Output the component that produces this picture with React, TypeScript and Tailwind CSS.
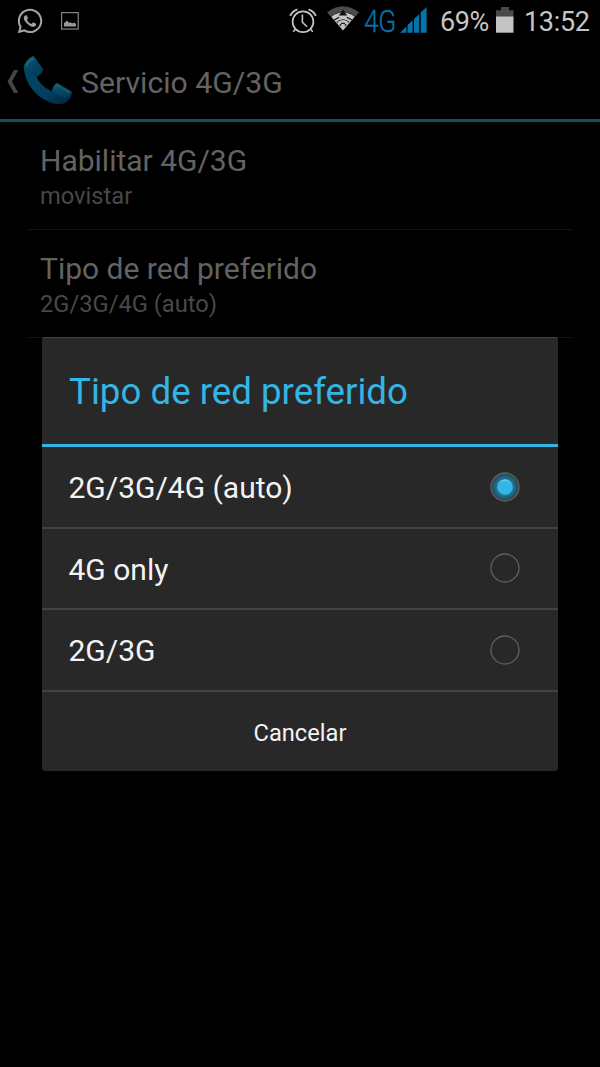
import { useState } from "react";
import { FaWhatsapp } from "react-icons/fa";

const options = ["2G/3G/4G (auto)", "4G only", "2G/3G"];

function PictureIcon() {
  return (
    <svg className="block h-[18px] w-[18px]" viewBox="0 0 18 18" fill="none">
      <rect x="0.6" y="0.6" width="16.6" height="16.4" stroke="#858585" strokeWidth="1.2" />
      <path d="M3 14.6v-3.8l1.4-.4.8-1.6 1.3.2 1.2 1.8 1.5-.6 1.2.9 1.8.2 1.4-.8 1.4 2.1v2z" fill="#999" />
    </svg>
  );
}

function AlarmIcon() {
  return (
    <svg className="block h-[26px] w-[28px]" viewBox="0 0 28 26" fill="none" stroke="#c4c4c4">
      <circle cx="14" cy="13.8" r="10.4" strokeWidth="1.7" />
      <path d="M1.2 7.8Q3.2 3.2 8.4 1.3M19.6 1.3q5.2 1.9 7.2 6.5" strokeWidth="1.9" />
      <path d="M13.4 6.5v7.7l4.6 4.6M6.4 21.3l-2.2 2.4M21.6 21.3l2.2 2.4" strokeWidth="1.6" />
    </svg>
  );
}

function WifiIcon() {
  return (
    <svg className="block h-[25px] w-[32px]" viewBox="0 0 32 25">
      <path d="M0 6.3Q16-5.7 32 6.3l-3.6 4.2Q16 .8 3.6 10.5z" fill="#4b4b4b" />
      <path d="M4.2 10.8Q16 1.7 27.8 10.8L16 24.5z" fill="#c5c5c5" />
      <path d="M16 4.6l-3 4.3h6zM7.2 14l5-2.8M24.8 14l-5-2.8M10 16.3q6-4.8 12 0M13.4 20l1.5-2.6M18.6 20l-1.5-2.6" fill="#111" stroke="#111" strokeWidth="1.3" />
      <path d="M10.5 16.1q5.5-4.2 11 0L16 22z" fill="#c5c5c5" />
      <path d="M14 17.4h4M12.6 18.7l2 .3M19.4 18.7l-2 .3" stroke="#222" strokeWidth="1.2" />
    </svg>
  );
}

function SignalIcon() {
  return (
    <svg className="block h-[26px] w-[27px]" viewBox="0 0 27 26" fill="#0673ae">
      <path d="M0 25.7 6.4 19.4V25.7zM7.6 18.1l5-4.9v12.5h-5zM14 11.9l5.3-5v18.8H14zM20.7 5.4 26.6 0v25.7h-5.9z" />
    </svg>
  );
}

function BatteryIcon() {
  return (
    <svg className="block h-[26px] w-[18px]" viewBox="0 0 18 26">
      <path d="M0 3.2h5V0h8v3.2h4.5V10H0z" fill="#494949" />
      <path d="M0 9.5h17.5v16.2H0z" fill="#c3c3c3" />
    </svg>
  );
}

function PhoneIcon() {
  return (
    <svg className="block h-[50px] w-[50px]" viewBox="0 0 50 50">
      <defs>
        <linearGradient id="handle" x1="0.3" y1="0.3" x2="0.8" y2="1">
          <stop offset="0" stopColor="#044463" />
          <stop offset="0.6" stopColor="#033e60" />
          <stop offset="1" stopColor="#032840" />
        </linearGradient>
        <linearGradient id="ear" x1="0.1" y1="0" x2="0.7" y2="1">
          <stop offset="0" stopColor="#1d6470" />
          <stop offset="0.35" stopColor="#074b68" />
          <stop offset="1" stopColor="#013a5a" />
        </linearGradient>
      </defs>
      <path
        d="M.8 13C1 8.5 5.8 2.2 10.7 1.3L19.8 14C20.4 15.8 16.5 20.5 13.5 21.8 16 28 22.5 34 29 36.2 29.6 32.6 32.4 28 34.4 28.3L48.6 36.4C50.2 41.8 44.8 47.9 38.5 49.2 28 49.8 16.5 43.5 9.5 34.5 4.3 27.8 1.5 20.8.8 13z"
        fill="url(#handle)"
      />
      <path d="M.8 13C1 8.5 5.8 2.2 10.7 1.3L19.8 14C20.4 15.8 16.5 20.5 13.5 21.8L4.5 16z" fill="url(#ear)" />
      <path d="M29 36.2C29.6 32.6 32.4 28 34.4 28.3L48.6 36.4C48.4 39 45.5 42 42 43.5z" fill="url(#ear)" />
      <path d="M2 10.5Q5 4.5 10.3 2.2L12 4.6Q7 6 4 12z" fill="#246c74" opacity="0.7" />
      <path d="M34 29l13.8 7.7-2 1.8L33 31z" fill="#1d6875" opacity="0.6" />
    </svg>
  );
}

function StatusBar() {
  return (
    <header className="flex h-[42px] shrink-0 items-start text-[#c5c5c5]">
      <FaWhatsapp className="mt-[7px] ml-[16.5px] h-[28px] w-[26px] text-[#a3a3a3]" />
      <div className="mt-[12px] ml-[18.5px]"><PictureIcon /></div>
      <div className="mt-[8px] ml-[210px]"><AlarmIcon /></div>
      <div className="mt-[6px] ml-[10px]"><WifiIcon /></div>
      <span className="mt-[2px] ml-[5px] w-[34px] origin-left scale-x-[0.85] text-[31px] leading-[40px] font-light tracking-[-0.3px] whitespace-nowrap text-[#0673ae] [-webkit-text-stroke:0.3px_#0673ae]">4G</span>
      <div className="mt-[7px] ml-[2px]"><SignalIcon /></div>
      <span className="mt-[2px] ml-[13px] w-[50px] text-[27px] leading-[40px] tracking-[-0.4px] whitespace-nowrap">69%</span>
      <div className="mt-[7px] ml-[6px]"><BatteryIcon /></div>
      <span className="mt-[2px] ml-[10px] text-[27px] leading-[40px] tracking-[-0.3px] whitespace-nowrap">13:52</span>
    </header>
  );
}

function Preference({ title, summary }: { title: string; summary: string }) {
  return (
    <div className="mx-[27px] h-[108px] border-b border-[#131313] pt-[19px] pl-[13px]">
      <div className="text-[30px] leading-[40px] whitespace-nowrap text-[#636363]">{title}</div>
      <div className="mt-[-1px] text-[23.7px] leading-[32px] whitespace-nowrap text-[#484848]">{summary}</div>
    </div>
  );
}

function Radio({ checked }: { checked: boolean }) {
  return (
    <svg className="block size-[30px]" viewBox="0 0 30 30">
      <defs>
        <radialGradient id="glow">
          <stop offset="0.5" stopColor="#1f7fa3" />
          <stop offset="1" stopColor="#27424c" />
        </radialGradient>
      </defs>
      <circle cx="15" cy="15" r="14" fill={checked ? "url(#glow)" : "none"} stroke="#606060" strokeWidth="1.3" />
      {checked && (
        <>
          <circle cx="15" cy="15" r="7.8" fill="#33b5e5" />
          <path d="M9.6 10.6Q15 5.4 20.4 10.6" fill="none" stroke="#76cdec" strokeWidth="1" />
        </>
      )}
    </svg>
  );
}

export default function App() {
  const [selected, setSelected] = useState(0);
  return (
    <div className="relative flex h-[1067px] w-[600px] flex-col overflow-hidden bg-black font-[Roboto,sans-serif]">
      <StatusBar />
      <div className="flex h-[80px] shrink-0 items-start border-b-[3px] border-[#114e67]">
        <svg className="mt-[28px] ml-[7px] block h-[23px] w-[12px]" viewBox="0 0 12 23">
          <path d="M7 0h4.3L5 11.5 11.3 23H7L.5 11.5z" fill="#454545" />
        </svg>
        <div className="mt-[13px] ml-[4px]"><PhoneIcon /></div>
        <h1 className="mt-[21px] ml-[8px] text-[30.2px] leading-[40px] whitespace-nowrap text-[#636363]">Servicio 4G/3G</h1>
      </div>
      <main className="flex flex-col">
        <Preference title="Habilitar 4G/3G" summary="movistar" />
        <Preference title="Tipo de red preferido" summary="2G/3G/4G (auto)" />
      </main>

      <section role="dialog" className="absolute top-[337px] left-[42px] flex h-[434px] w-[516px] flex-col overflow-hidden rounded-[3px] border-t border-[#424242] bg-[#282828]">
        <h2 className="h-[109px] shrink-0 border-b-[3px] border-[#33b5e5] pt-[29px] pl-[27px] text-[36.7px] leading-[50px] whitespace-nowrap text-[#33b5e5]">
          Tipo de red preferido
        </h2>
        {options.map((label, index) => (
          <button
            key={label}
            onClick={() => setSelected(index)}
            className="flex h-[81.6px] shrink-0 items-center justify-between border-b-2 border-[#424242] pr-[38px] pl-[26.5px] text-left text-[30px] text-[#f3f3f3]"
          >
            <span className="pt-[2px] whitespace-nowrap">{label}</span>
            <Radio checked={selected === index} />
          </button>
        ))}
        <button className="flex-1 pt-[4px] text-[23.7px] text-[#f3f3f3]">Cancelar</button>
      </section>
    </div>
  );
}
